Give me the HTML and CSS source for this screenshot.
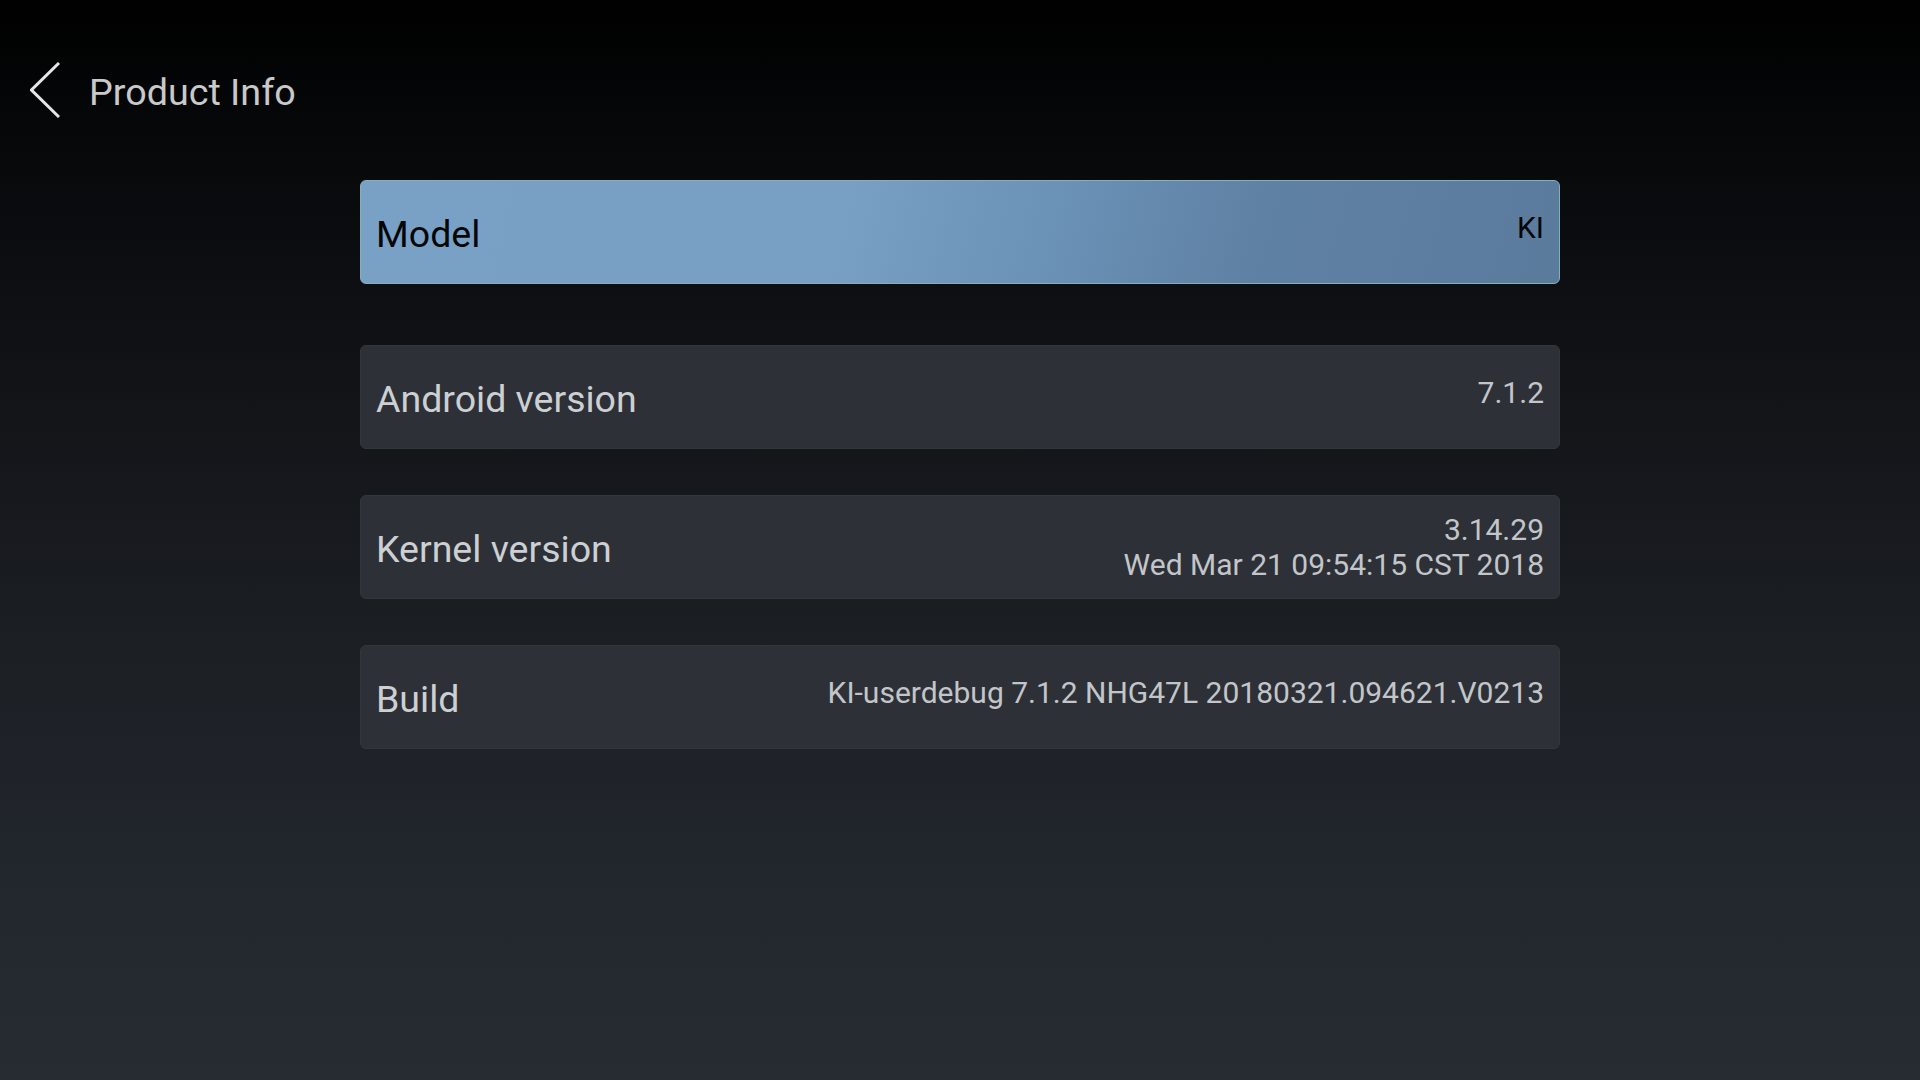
FILE: index.html
```html
<!DOCTYPE html>
<html lang="en">
<head>
    <meta charset="UTF-8">
    <meta name="viewport" content="width=device-width, initial-scale=1.0">
    <title>Product Info</title>
    <link rel="stylesheet" href="styles.css">
</head>
<body>
    <div class="screen">
        <!-- Header -->
        <div class="top-bar">
            <svg class="back-icon" width="30" height="56" viewBox="0 0 30 56">
                <polyline points="29,1 1.5,28 29,55" fill="none" stroke="#e6e6e6" stroke-width="3"/>
            </svg>
            <div class="page-title">Product Info</div>
        </div>

        <div class="info-list">
            <div class="info-row selected">
                <div class="info-label">Model</div>
                <div class="info-value">KI</div>
            </div>

            <div class="info-row first-plain">
                <div class="info-label">Android version</div>
                <div class="info-value">7.1.2</div>
            </div>

            <div class="info-row">
                <div class="info-label">Kernel version</div>
                <div class="info-value multi">3.14.29<br>Wed Mar 21 09:54:15 CST 2018</div>
            </div>

            <div class="info-row">
                <div class="info-label">Build</div>
                <div class="info-value">KI-userdebug 7.1.2 NHG47L 20180321.094621.V0213</div>
            </div>
        </div>
    </div>
</body>
</html>
```

FILE: styles.css
```css
html, body {
    margin: 0;
    padding: 0;
}
body {
    font-family: Roboto, 'Noto Sans', sans-serif;
    width: 1920px;
    height: 1080px;
    overflow: hidden;
    background: linear-gradient(180deg, #000000 0%, #07090b 15%, #111317 35%, #1c1f24 60%, #23282f 85%, #262c31 100%);
}
.screen {
    height: 1080px;
}
.top-bar {
    display: flex;
    align-items: center;
    gap: 29px;
    padding: 62px 0 0 30px;
    height: 56px;
}
.back-icon {
    display: block;
}
.page-title {
    font-size: 37.7px;
    color: #c9c9c9;
    margin-top: 4px;
}
.info-list {
    width: 1200px;
    margin: 62px auto 0;
    display: flex;
    flex-direction: column;
    gap: 46px;
}
.info-row {
    box-sizing: border-box;
    height: 104px;
    display: flex;
    align-items: center;
    justify-content: space-between;
    padding: 0 15px;
    background: #2d3037;
    border: 1px solid #2e3a3a;
    border-radius: 6px;
}
.info-row.first-plain {
    margin-top: 15px;
}
.info-label {
    font-size: 37.5px;
    color: #cdd0d3;
    margin-top: 3px;
}
.info-value {
    font-size: 30px;
    line-height: 35px;
    color: #c3c6c9;
    text-align: right;
    margin-bottom: 10px;
}
.info-value.multi {
    margin-bottom: 0;
}
.info-row.selected {
    background: linear-gradient(105deg, #79a1c6 0%, #77a0c4 40%, #6a91b6 58%, #5f81a4 74%, #5b7b9d 100%);
    border-color: #84b1b5;
}
.info-row.selected .info-label,
.info-row.selected .info-value {
    color: #050608;
}
```
